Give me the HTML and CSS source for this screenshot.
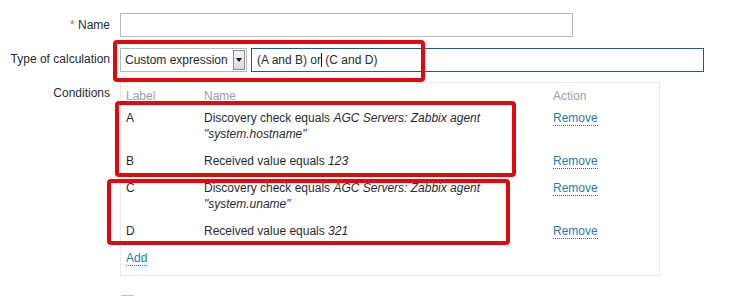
FILE: index.html
```html
<!DOCTYPE html>
<html>
<head>
<meta charset="utf-8">
<link rel="stylesheet" href="styles.css">
</head>
<body>
<div class="form">
  <div class="row row-name">
    <div class="label"><span class="req">*</span> Name</div>
    <div class="field"><div class="input name-input"></div></div>
  </div>
  <div class="row row-calc">
    <div class="label">Type of calculation</div>
    <div class="field calc-field">
      <div class="select"><span class="select-text">Custom expression</span><span class="select-btn"><span class="tri"></span></span></div>
      <div class="input expr-input">(A and B) or<span class="caret"></span> (C and D)</div>
    </div>
  </div>
  <div class="row row-cond">
    <div class="label">Conditions</div>
    <div class="field">
      <div class="cond-box">
        <div class="crow head"><div class="c-label">Label</div><div class="c-name">Name</div><div class="c-action">Action</div></div>
        <div class="crow"><div class="c-label">A</div><div class="c-name"><span>Discovery check equals <i>AGC Servers: Zabbix agent</i></span><span><i>"system.hostname"</i></span></div><div class="c-action"><a class="link">Remove</a></div></div>
        <div class="crow"><div class="c-label">B</div><div class="c-name"><span>Received value equals <i>123</i></span></div><div class="c-action"><a class="link">Remove</a></div></div>
        <div class="crow"><div class="c-label">C</div><div class="c-name"><span>Discovery check equals <i>AGC Servers: Zabbix agent</i></span><span><i>"system.uname"</i></span></div><div class="c-action"><a class="link">Remove</a></div></div>
        <div class="crow"><div class="c-label">D</div><div class="c-name"><span>Received value equals <i>321</i></span></div><div class="c-action"><a class="link">Remove</a></div></div>
        <div class="crow add-row"><div class="c-label"><a class="link">Add</a></div></div>
      </div>
    </div>
  </div>
  <div class="row row-check">
    <div class="label"></div>
    <div class="field"><span class="checkbox"></span></div>
  </div>
</div>
<div class="mark mark-1"></div>
<div class="mark mark-2"></div>
<div class="mark mark-3"></div>
</body>
</html>
```
FILE: styles.css
```css
html, body {
  margin: 0;
  padding: 0;
  background: #ffffff;
  overflow: hidden;
}
body {
  width: 744px;
  height: 296px;
  position: relative;
  font-family: "Liberation Sans", Arial, sans-serif;
  font-size: 12px;
  color: #1f2c33;
}
.form {
  padding-top: 13px;
}
.row {
  display: flex;
  align-items: flex-start;
}
.label {
  width: 110px;
  text-align: right;
  flex: none;
  line-height: 24px;
  color: #1f2c33;
}
.req {
  color: #e45959;
}
.field {
  margin-left: 10px;
}
.input {
  box-sizing: border-box;
  height: 24px;
  border: 1px solid #b8b8b8;
  background: #fff;
  line-height: 22px;
  padding: 0 5px;
}
.name-input {
  width: 453px;
}
.row-calc {
  margin-top: 10px;
  height: 25px;
  padding-top: 1px;
}
.row-calc .label {
  line-height: 24px;
  margin-top: -1px;
}
.calc-field {
  display: flex;
  gap: 4px;
}
.select {
  box-sizing: border-box;
  width: 127px;
  height: 24px;
  border: 1px solid #b8b8b8;
  display: flex;
  align-items: center;
  justify-content: space-between;
  padding-left: 4px;
  padding-right: 1px;
}
.select-text {
  line-height: 22px;
}
.select-btn {
  box-sizing: border-box;
  width: 12px;
  height: 20px;
  background: linear-gradient(#f4f4f4, #dcdcdc);
  border: 1px solid #8c8c8c;
  display: flex;
  align-items: center;
  justify-content: center;
}
.tri {
  width: 0;
  height: 0;
  border-left: 3px solid transparent;
  border-right: 3px solid transparent;
  border-top: 4px solid #111;
}
.expr-input {
  width: 453px;
  border-color: #1b5e7d;
  padding-left: 5px;
}
.caret {
  display: inline-block;
  width: 0;
  height: 14px;
  border-left: 1px solid #111;
  vertical-align: -3px;
}
.row-cond {
  margin-top: 9px;
}
.row-cond .label {
  line-height: 16px;
  padding-top: 3px;
}
.cond-box {
  box-sizing: border-box;
  width: 540px;
  height: 194px;
  border: 1px solid #ebebeb;
  padding: 4px 0 0 5px;
}
.crow {
  display: flex;
  line-height: 16px;
  padding: 5px 0 6px;
}
.crow.head {
  padding: 1px 0 1px;
  color: #9aa1a5;
}
.crow.row-last {
  padding-bottom: 7px;
}
.c-label {
  width: 78px;
  flex: none;
}
.c-name {
  width: 300px;
  flex: none;
  margin-right: 49px;
  display: flex;
  flex-direction: column;
  align-items: flex-start;
}
.c-action {
  flex: none;
}
.link {
  color: #1f7bb5;
  border-bottom: 1px dotted #1f7bb5;
  cursor: pointer;
}
.row-check {
  margin-top: 19px;
}
.checkbox {
  display: block;
  width: 13px;
  height: 13px;
  box-sizing: border-box;
  border: 1px solid #c2c2c2;
  background: #dcdcdc;
  margin-left: 1px;
}
.mark {
  position: absolute;
  box-sizing: border-box;
  border: 4px solid #e0070e;
  border-radius: 4px;
}
.mark-1 {
  left: 113px;
  top: 40px;
  width: 312px;
  height: 42px;
}
.mark-2 {
  left: 115px;
  top: 101px;
  width: 401px;
  height: 76px;
}
.mark-3 {
  left: 107px;
  top: 179px;
  width: 403px;
  height: 66px;
}
```
